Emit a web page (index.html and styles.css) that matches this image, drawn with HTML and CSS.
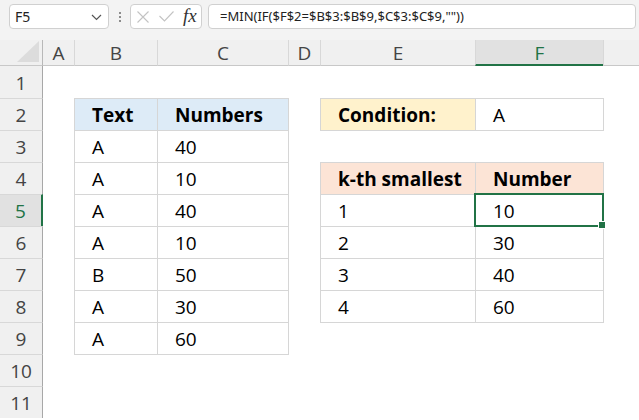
FILE: index.html
```html
<!DOCTYPE html>
<html>
<head>
<meta charset="utf-8">
<link rel="stylesheet" href="styles.css">
</head>
<body>
<div class="app">
  <div class="fbar">
    <div class="namebox">
      <span>F5</span>
      <svg class="chev" width="11" height="7" viewBox="0 0 11 7"><path d="M1 1 L5.5 5.5 L10 1" fill="none" stroke="#555" stroke-width="1.2"/></svg>
    </div>
    <div class="vdots"><i></i><i></i><i></i></div>
    <div class="fxbox">
      <svg class="ic-x" width="12" height="12" viewBox="0 0 12 12"><path d="M0.5 0.5 L11.5 11.5 M11.5 0.5 L0.5 11.5" stroke="#c3c3c3" stroke-width="1.1" fill="none"/></svg>
      <svg class="ic-ok" width="15" height="11" viewBox="0 0 15 11"><path d="M0.5 5 L5.5 10 L14.5 0.5" stroke="#c3c3c3" stroke-width="1.1" fill="none"/></svg>
      <span class="fx">fx</span>
    </div>
    <div class="formula">=MIN(IF($F$2=$B$3:$B$9,$C$3:$C$9,""))</div>
  </div>
  <div class="sheet">
    <div class="corner"><span class="tri"></span></div>
    <div class="ch">A</div>
    <div class="ch">B</div>
    <div class="ch">C</div>
    <div class="ch">D</div>
    <div class="ch">E</div>
    <div class="ch on">F</div>
    <div class="ch"></div>

    <div class="rh">1</div>
    <div class="rh">2</div>
    <div class="rh">3</div>
    <div class="rh">4</div>
    <div class="rh on">5</div>
    <div class="rh">6</div>
    <div class="rh">7</div>
    <div class="rh">8</div>
    <div class="rh">9</div>
    <div class="rh">10</div>
    <div class="rh">11</div>

    <div class="tbl t1">
      <div class="c hd blue">Text</div><div class="c hd blue">Numbers</div>
      <div class="c">A</div><div class="c">40</div>
      <div class="c">A</div><div class="c">10</div>
      <div class="c">A</div><div class="c">40</div>
      <div class="c">A</div><div class="c">10</div>
      <div class="c">B</div><div class="c">50</div>
      <div class="c">A</div><div class="c">30</div>
      <div class="c">A</div><div class="c">60</div>
    </div>

    <div class="tbl t2">
      <div class="c hd yellow">Condition:</div><div class="c">A</div>
    </div>

    <div class="tbl t3">
      <div class="c hd peach">k-th smallest</div><div class="c hd peach">Number</div>
      <div class="c">1</div><div class="c sel">10</div>
      <div class="c">2</div><div class="c">30</div>
      <div class="c">3</div><div class="c">40</div>
      <div class="c">4</div><div class="c">60</div>
    </div>
  </div>
</div>
</body>
</html>
```

FILE: styles.css
```css
* { box-sizing: border-box; }
body { margin: 0; background: #fff; font-family: "Open Sans", sans-serif; }
.app { width: 639px; height: 420px; overflow: hidden; background: #fff; }

.fbar {
  height: 40px;
  background: #f3f3f3;
  display: flex;
  align-items: flex-start;
  padding: 4px 3px 0 9px;
}
.namebox {
  width: 100px; height: 25px;
  border: 1px solid #d0d0d0; border-radius: 4px; background: #fff;
  display: flex; align-items: center; justify-content: space-between;
  padding: 0 6px 0 5px;
  font-family: "Noto Sans", sans-serif; font-size: 14px; color: #222;
}
.chev { margin-top: 1px; }
.vdots {
  width: 21px; display: flex; flex-direction: column; align-items: center;
  gap: 2px; padding-top: 8px;
}
.vdots i { display: block; width: 2px; height: 2px; background: #8c8c8c; }
.fxbox {
  width: 72px; height: 25px;
  border: 1px solid #d0d0d0; border-radius: 4px; background: #fff;
  display: flex; align-items: center; padding-left: 6px;
}
.ic-ok { margin-left: 10px; }
.fx {
  margin-left: 9px;
  font-family: "Liberation Serif", serif; font-style: italic; font-size: 19px; color: #333;
  line-height: 20px; margin-top: -2px;
}
.formula {
  flex: 1; height: 25px; margin-left: 6px;
  border: 1px solid #d0d0d0; border-radius: 4px; background: #fff;
  padding-left: 11px;
  font-family: "Noto Sans", sans-serif; font-size: 13px; color: #222;
  line-height: 23px; white-space: nowrap; overflow: hidden;
}

.sheet {
  height: 380px;
  display: grid;
  grid-template-columns: 43px 31px 83px 131px 32px 155px 128px 1fr;
  grid-template-rows: 26px repeat(11, 32px) 1fr;
  font-size: 19px;
}
.corner {
  background: #f0f0f0; border-right: 1px solid #b8b8b8; border-bottom: 1px solid #c8c8c8;
  position: relative;
}
.tri {
  position: absolute; left: 17px; top: 1px; width: 22px; height: 21px;
  background: #dcdcdc; clip-path: polygon(100% 0, 100% 100%, 0 100%);
}
.ch {
  background: #f0f0f0; border-left: 1px solid #d8d8d8; border-bottom: 1px solid #c8c8c8;
  color: #444; text-align: center; line-height: 27px;
}
.ch:nth-child(2) { border-left: none; }
.ch.on { background: #e1e1e1; color: #217346; border-bottom: 2px solid #217346; }
.rh {
  grid-column: 1;
  background: #f0f0f0; border-top: 1px solid #d8d8d8; border-right: 1px solid #a8a8a8;
  color: #444; text-align: center;
  display: flex; align-items: flex-end; justify-content: center;
  line-height: 26px; padding-bottom: 2px;
}
.rh:nth-child(9) { border-top: none; }
.rh.on { background: #e1e1e1; color: #217346; border-right: 2px solid #217346; }

.tbl {
  display: grid;
  width: calc(100% + 1px); height: calc(100% + 1px);
  border-right: 1px solid #d6d6d6; border-bottom: 1px solid #d6d6d6;
  grid-auto-rows: 32px;
}
.t1 { grid-column: 3 / 5; grid-row: 3 / 11; grid-template-columns: 83px 131px; }
.t2 { grid-column: 6 / 8; grid-row: 3 / 4; grid-template-columns: 155px 128px; }
.t3 { grid-column: 6 / 8; grid-row: 5 / 10; grid-template-columns: 155px 128px; }
.c {
  border-left: 1px solid #d6d6d6; border-top: 1px solid #d6d6d6;
  display: flex; align-items: flex-end;
  padding: 0 0 2px 17px; line-height: 26px; color: #000;
  position: relative;
}
.hd { font-weight: 700; }
.blue { background: #ddebf7; }
.yellow { background: #fff2cc; }
.peach { background: #fce4d6; }
.sel { outline: 2px solid #217346; outline-offset: -1px; z-index: 1; }
.sel::after {
  content: ""; position: absolute; right: -3px; bottom: -3px;
  width: 6px; height: 6px; background: #217346; border: 1px solid #fff;
}
```
